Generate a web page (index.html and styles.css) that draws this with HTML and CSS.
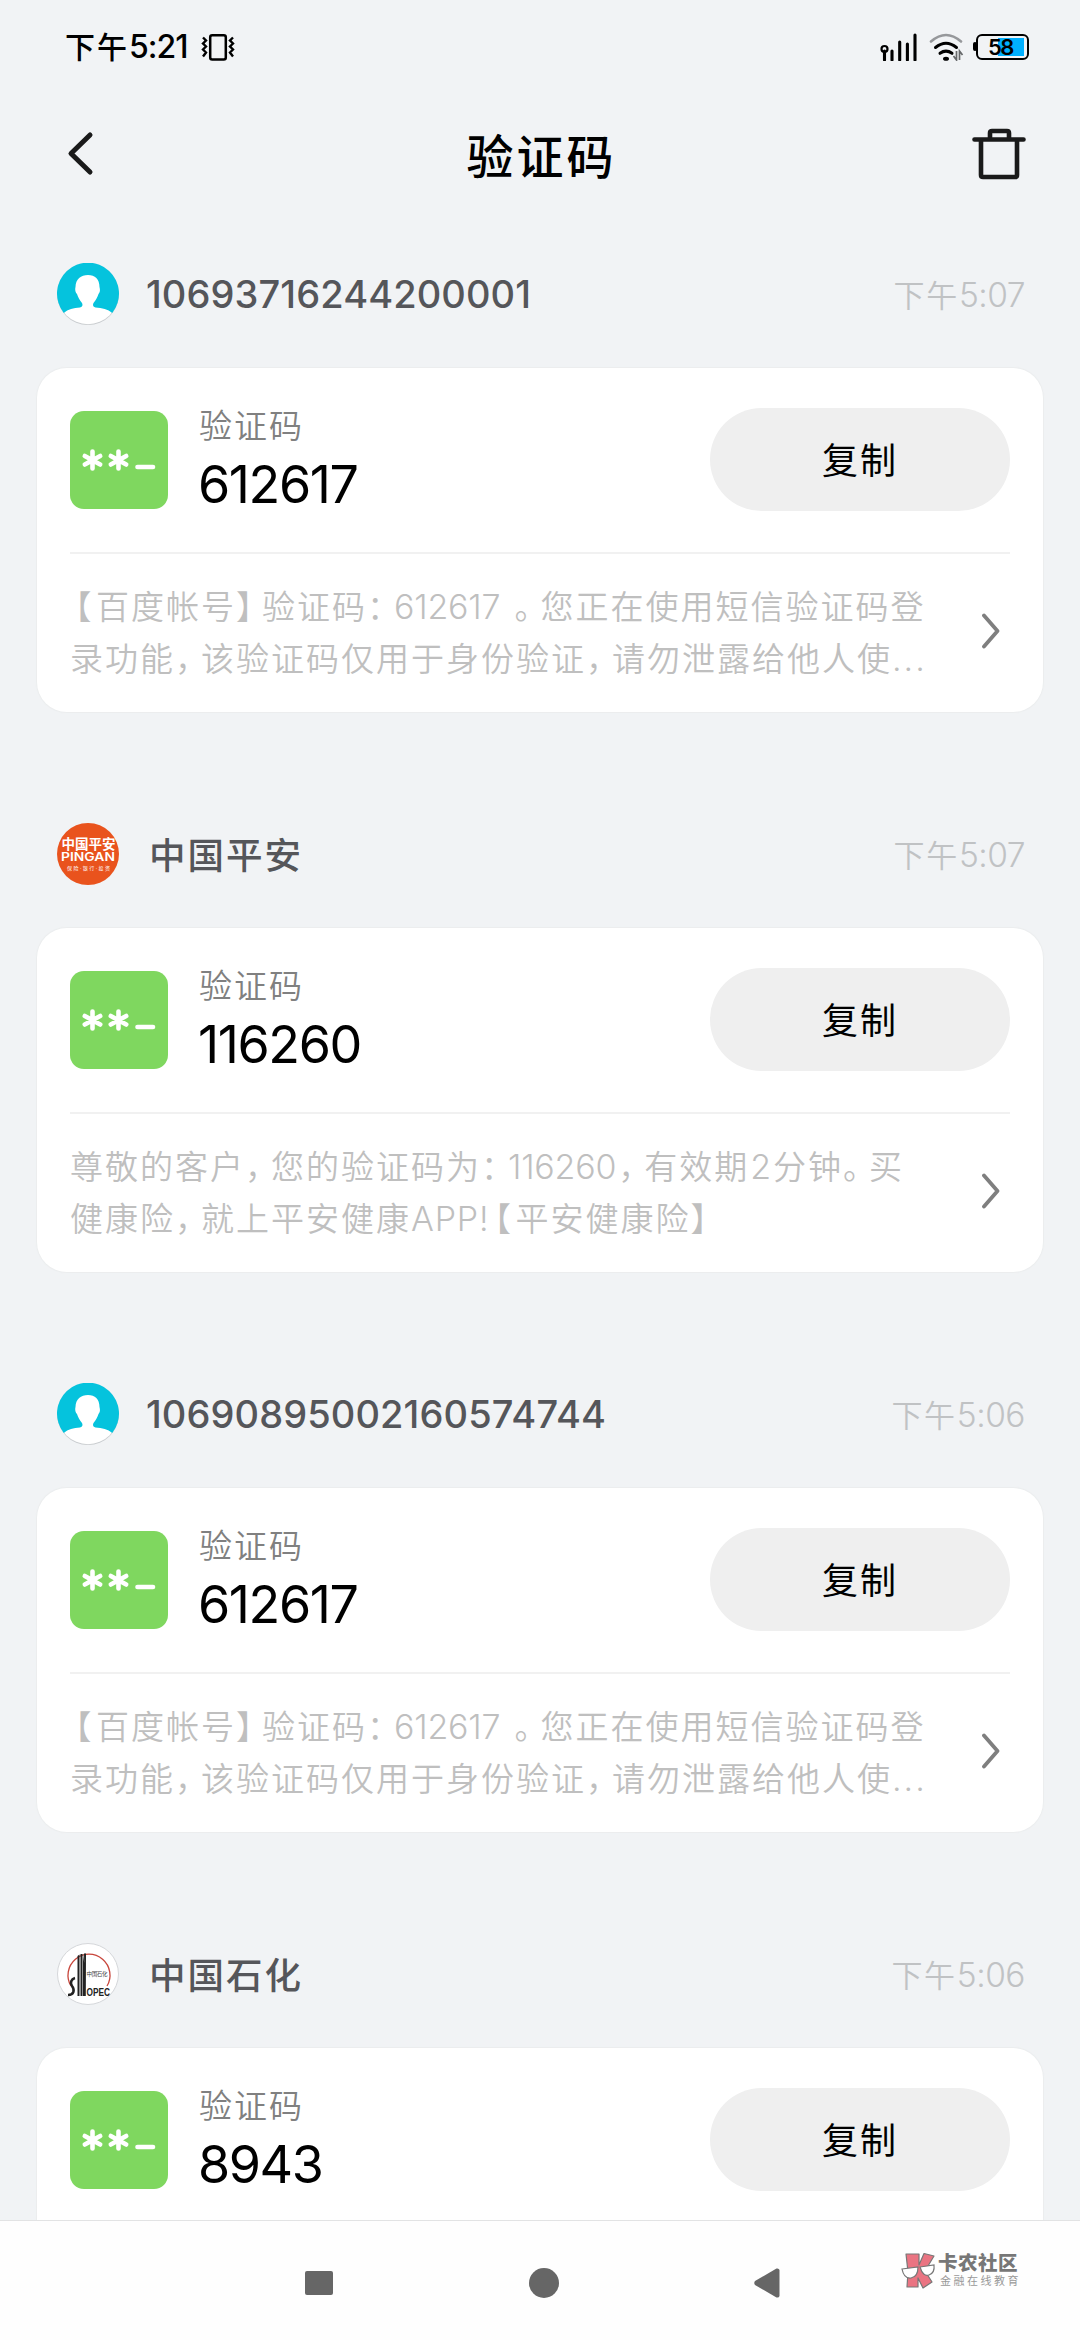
FILE: index.html
```
<!DOCTYPE html>
<html lang="zh-CN">
<head>
    <meta charset="UTF-8">
    <meta name="viewport" content="width=device-width, initial-scale=1.0">
    <title>验证码</title>
    <link rel="stylesheet" href="styles.css">
</head>
<body>
    <!-- Shared icons -->
    <svg class="defs" width="0" height="0">
        <symbol id="person" viewBox="0 0 62 62">
            <circle cx="31" cy="31" r="31" fill="#c9cccf"/>
            <circle cx="31" cy="30.6" r="30.6" fill="#fff"/>
            <path d="M6.8 50A31 31 0 1 1 55.2 50C51 46 45 45 38.500 44.500C36 44 35.500 42 36.500 40C39 37 40.500 34 41.500 31C43.500 29 43 26 42.500 24C42.500 16 38 12 31 12C24 12 18.500 16 18.500 24C18 26 18 29 20 31C21 34 22.500 37 25 40C26 42 25.500 44 23 44.500C16.500 45 11 46 6.800 50Z" fill="#05c3dd"/>
        </symbol>
        <symbol id="code" viewBox="0 0 98 98">
            <rect width="98" height="98" rx="14" fill="#7fd75f"/>
            <g stroke="#fff" stroke-width="4.600" stroke-linecap="round">
                <path d="M22.500 40.500v17M14.800 45l15.400 8.500M30.200 45l-15.400 8.500"/>
                <path d="M48.500 40.500v17M40.800 45l15.400 8.500M56.200 45l-15.400 8.500"/>
                <path d="M67.500 56h15.500"/>
            </g>
        </symbol>
        <symbol id="arrow" viewBox="0 0 20 36">
            <path d="M3 2.500L16.500 18L3 33.500" fill="none" stroke="#7f7f7f" stroke-width="3.800" stroke-linecap="round" stroke-linejoin="round"/>
        </symbol>
    </svg>

    <div class="status-bar">
        <span class="clock">下午<b>5:21</b></span>
        <svg class="vibrate" width="34" height="28" viewBox="0 0 34 28">
            <rect x="9.200" y="2.200" width="15.600" height="24.300" rx="2" fill="none" stroke="#000" stroke-width="2.500"/>
            <path d="M2 4.500l3 3-3 3 3 3-3 3 3 3-3 4M32 4.500l-3 3 3 3-3 3 3 3-3 3 3 4" fill="none" stroke="#000" stroke-width="2.400"/>
        </svg>
        <div class="status-icons">
            <svg width="38" height="28" viewBox="0 0 38 28">
                <circle cx="4.500" cy="16" r="3" fill="none" stroke="#000" stroke-width="2.200"/>
                <path d="M4.500 18v9M12 18v9M19.700 9v18M27.400 11v16M35 2v25" stroke="#000" stroke-width="3.100" stroke-linecap="round"/>
            </svg>
            <svg width="35" height="28" viewBox="0 0 35 28">
                <path d="M2 8.500Q17 -4.500 32 8.500" fill="none" stroke="#96989b" stroke-width="2.600" stroke-linecap="round"/>
                <path d="M6.500 14.500Q17 6 27.500 14.500M11 20.300Q17 16 23 20.300" fill="none" stroke="#000" stroke-width="3" stroke-linecap="round"/>
                <ellipse cx="17" cy="25.800" rx="3" ry="2" fill="#000"/>
                <path d="M27.500 18v9l-3-4M30.500 27v-9l3 4" fill="none" stroke="#66686a" stroke-width="1.700"/>
            </svg>
            <div class="battery"><span>58</span></div>
        </div>
    </div>

    <header class="title-bar">
        <svg width="28" height="48" viewBox="0 0 28 48">
            <path d="M23 5L4 23.500L23 42" fill="none" stroke="#1a1a1a" stroke-width="5" stroke-linecap="round" stroke-linejoin="round"/>
        </svg>
        <h1>验证码</h1>
        <svg width="54" height="54" viewBox="0 0 54 54">
            <path d="M2.500 12.500h49M9 13v35q0 2 2 2h32q2 0 2-2V13M18 12V6q0-2 2-2h15q2 0 2 2v6" fill="none" stroke="#1a1a1a" stroke-width="4.600" stroke-linecap="round"/>
        </svg>
    </header>

    <main class="list">
        <section class="item">
            <div class="sender">
                <svg class="avatar"><use href="#person"/></svg>
                <span class="name number">10693716244200001</span>
                <span class="time">下午<b>5:07</b></span>
            </div>
            <div class="card">
                <div class="card-top">
                    <svg class="code-icon"><use href="#code"/></svg>
                    <div class="code">
                        <div class="label">验证码</div>
                        <div class="value">612617</div>
                    </div>
                    <button>复制</button>
                </div>
                <div class="card-bottom">
                    <p><i class="open">【</i>百度帐号<i>】</i>验证码<i>：</i><span class="num">612617</span><i class="stop">。</i>您正在使用短信验证码登<br>录功能<i>，</i>该验证码仅用于身份验证<i>，</i>请勿泄露给他人使<span class="dots">...</span></p>
                    <svg class="arrow"><use href="#arrow"/></svg>
                </div>
            </div>
        </section>

        <section class="item">
            <div class="sender">
                <svg class="avatar" viewBox="0 0 62 62">
                    <circle cx="31" cy="31" r="31" fill="#e9531d"/>
                    <g fill="#fff" font-family="Inter, 'Noto Sans CJK SC', sans-serif">
                        <text x="4.500" y="25.500" font-size="13.500" font-weight="700" textLength="54">中国平安</text>
                        <text x="4" y="38" font-size="12" font-weight="600" textLength="54" lengthAdjust="spacingAndGlyphs">PINGAN</text>
                        <text x="10" y="47" font-size="5" textLength="43">保险·银行·投资</text>
                    </g>
                </svg>
                <span class="name">中国平安</span>
                <span class="time">下午<b>5:07</b></span>
            </div>
            <div class="card">
                <div class="card-top">
                    <svg class="code-icon"><use href="#code"/></svg>
                    <div class="code">
                        <div class="label">验证码</div>
                        <div class="value">116260</div>
                    </div>
                    <button>复制</button>
                </div>
                <div class="card-bottom">
                    <p>尊敬的客户<i>，</i>您的验证码为<i>：</i><span class="num">116260</span><i>，</i>有效期<span class="num">2</span>分钟<i>。</i>买<br>健康险<i>，</i>就上平安健康<span class="latin">APP!</span><i class="open">【</i>平安健康险<i>】</i></p>
                    <svg class="arrow"><use href="#arrow"/></svg>
                </div>
            </div>
        </section>

        <section class="item">
            <div class="sender">
                <svg class="avatar"><use href="#person"/></svg>
                <span class="name number">10690895002160574744</span>
                <span class="time">下午<b>5:06</b></span>
            </div>
            <div class="card">
                <div class="card-top">
                    <svg class="code-icon"><use href="#code"/></svg>
                    <div class="code">
                        <div class="label">验证码</div>
                        <div class="value">612617</div>
                    </div>
                    <button>复制</button>
                </div>
                <div class="card-bottom">
                    <p><i class="open">【</i>百度帐号<i>】</i>验证码<i>：</i><span class="num">612617</span><i class="stop">。</i>您正在使用短信验证码登<br>录功能<i>，</i>该验证码仅用于身份验证<i>，</i>请勿泄露给他人使<span class="dots">...</span></p>
                    <svg class="arrow"><use href="#arrow"/></svg>
                </div>
            </div>
        </section>

        <section class="item">
            <div class="sender">
                <svg class="avatar" viewBox="0 0 62 62">
                    <circle cx="31" cy="31" r="30.500" fill="#fff" stroke="#d5d7da"/>
                    <path d="M14 43A21 21 0 1 1 50 43" fill="none" stroke="#c8463c" stroke-width="1.300"/>
                    <path d="M20.500 13L22.500 11.500V53H20.500ZM23.500 11h2V53h-2ZM26 10.500l2.500 20V53H26ZM27 10.500h2l-.2 42.500h-1Z" fill="#222"/>
                    <path d="M18 35C14 36 13 40 15 43C18 47 17 52 11 52" fill="none" stroke="#222" stroke-width="2.500"/>
                    <text x="29.500" y="33" font-family="'Noto Sans CJK SC', sans-serif" font-size="5.500" fill="#444" textLength="21">中国石化</text>
                    <text x="29.500" y="53" font-family="'Liberation Sans', sans-serif" font-weight="700" font-size="10.500" fill="#222" textLength="23.500" lengthAdjust="spacingAndGlyphs">OPEC</text>
                </svg>
                <span class="name">中国石化</span>
                <span class="time">下午<b>5:06</b></span>
            </div>
            <div class="card">
                <div class="card-top">
                    <svg class="code-icon"><use href="#code"/></svg>
                    <div class="code">
                        <div class="label">验证码</div>
                        <div class="value">8943</div>
                    </div>
                    <button>复制</button>
                </div>
            </div>
        </section>
    </main>

    <nav class="nav-bar">
        <svg width="28" height="30" viewBox="0 0 28 30"><rect y="3" width="28" height="24" rx="2"/></svg>
        <svg width="30" height="30" viewBox="0 0 30 30"><circle cx="15" cy="15" r="15"/></svg>
        <svg width="26" height="30" viewBox="0 0 26 30"><path d="M1 13L22.500.5Q25 0 25.500 2V28Q25 30 22.500 29.500L1 17Q-.5 15 1 13Z"/></svg>
        <div class="watermark">
            <svg width="36" height="38" viewBox="0 0 36 38">
                <path d="M6 2h13v11L24 1.500l10 2.500-9 15 7 11-9 6-5-10v9H7L8 20Z" fill="#ea7482" stroke="#777" stroke-width="1.200" stroke-linejoin="round"/>
                <path d="M2 17l16-2q0 10-7 11t-9-9ZM20 15l14-2q1 8-5 10t-9-8Z" fill="#fff" stroke="#777" stroke-width="1.200"/>
            </svg>
            <div>
                <div class="brand">卡农社区</div>
                <div class="slogan">金融在线教育</div>
            </div>
        </div>
    </nav>
</body>
</html>
```

FILE: styles.css
```
* {
    box-sizing: border-box;
}
body {
    font-family: Inter, "Noto Sans CJK SC", sans-serif;
    margin: 0;
    height: 2340px;
    display: flex;
    flex-direction: column;
    overflow: hidden;
    background-color: #f1f3f5;
    color: #000;
}
svg {
    display: block;
    flex: none;
}
b, i {
    font-weight: inherit;
    font-style: normal;
}
.defs {
    position: absolute;
}

/* Status bar */
.status-bar {
    height: 94px;
    padding: 0 51px 0 65px;
    display: flex;
    align-items: center;
}
.clock {
    font-size: 30px;
    font-weight: 500;
    letter-spacing: 2px;
    line-height: 40px;
}
.clock b {
    font-size: 32px;
    font-weight: 500;
    letter-spacing: -1px;
}
.vibrate {
    margin-left: 14px;
}
.status-icons {
    margin-left: auto;
    display: flex;
    align-items: center;
    gap: 11px;
}
.battery {
    position: relative;
    width: 53px;
    height: 26px;
    border: 2.5px solid #000;
    border-radius: 6px;
    margin-left: 1px;
    padding: 2px 4px 2px 0;
    background: linear-gradient(#00b0ff, #00b0ff) no-repeat 20px 2px / 26px 18px;
    font-size: 22px;
    font-weight: 600;
    line-height: 19px;
    letter-spacing: -1.5px;
    text-align: center;
}
.battery::before {
    content: "";
    position: absolute;
    left: -5px;
    top: 6px;
    width: 4px;
    height: 9px;
    border-radius: 2px;
    background: #000;
}

/* Title */
.title-bar {
    height: 120px;
    padding: 0 54px 0 67px;
    display: flex;
    align-items: center;
    justify-content: space-between;
}
.title-bar h1 {
    margin: 6px 0 0 16px;
    font-size: 47px;
    font-weight: 500;
    letter-spacing: 3px;
    line-height: 60px;
}

/* Message list */
.list {
    flex: 1;
    min-height: 0;
    overflow: hidden;
    padding: 48px 37px 0;
}
.item {
    margin-bottom: 110px;
}
.sender {
    height: 63px;
    margin-bottom: 43px;
    padding: 0 18px 0 20px;
    display: flex;
    align-items: center;
}
.avatar {
    width: 62px;
    height: 62px;
}
.name {
    margin-left: 30px;
    font-size: 36.5px;
    font-weight: 500;
    letter-spacing: 2px;
    color: #55565a;
}
.number {
    margin-left: 27px;
    font-size: 38px;
    letter-spacing: 0.1px;
}
.time {
    margin-left: auto;
    font-size: 31px;
    font-weight: 350;
    letter-spacing: 1.700px;
    color: #c0c2c4;
}
.time b {
    font-size: 33.5px;
    letter-spacing: -0.5px;
}
.card {
    height: 344px;
    padding: 0 33px;
    background-color: #fff;
    border-radius: 30px;
    box-shadow: 0 0 1px 1px #ebedee;
}
.card-top {
    height: 186px;
    padding-top: 40px;
    display: flex;
    border-bottom: 2px solid #f1f1f1;
}
.code-icon {
    width: 98px;
    height: 98px;
    margin-top: 3px;
}
.code {
    margin-left: 31px;
}
.label {
    font-size: 33px;
    font-weight: 350;
    letter-spacing: 2px;
    line-height: 36px;
    color: #808080;
}
.value {
    margin: 8px 0 0 -1px;
    font-size: 52px;
    font-weight: 400;
    line-height: 66px;
    letter-spacing: -1.400px;
}
button {
    margin-left: auto;
    width: 300px;
    height: 103px;
    padding: 0 0 3px;
    border: 0;
    border-radius: 52px;
    background-color: #efefef;
    font-family: inherit;
    font-size: 36px;
    font-weight: 400;
    letter-spacing: 2px;
    color: #000;
}
.card-bottom {
    height: 158px;
    display: flex;
    align-items: center;
    justify-content: space-between;
}
.card-bottom p {
    margin: 0;
    font-size: 33px;
    font-weight: 350;
    letter-spacing: 2px;
    line-height: 52px;
    white-space: nowrap;
    color: #bfbfbf;
}
/* punctuation is set narrower than a full em */
p i {
    letter-spacing: -7px;
}
p .open {
    padding-left: 5px;
    font-feature-settings: "halt";
    letter-spacing: 4.5px;
}
p .stop {
    padding-left: 12px;
}
.num, .latin, .dots {
    font-size: 34px;
    letter-spacing: -0.200px;
}
.num {
    padding: 0 2px 0 1px;
}
.latin {
    letter-spacing: 0.8px;
}
.dots {
    letter-spacing: 2px;
}
.arrow {
    width: 20px;
    height: 36px;
    margin: -5px 9px 0 0;
}

/* System navigation */
.nav-bar {
    position: relative;
    height: 120px;
    border-top: 1px solid #e2e3e4;
    padding: 4px 300px 0 305px;
    background-color: #fefefe;
    display: flex;
    align-items: center;
    justify-content: space-between;
    fill: #666;
}
.watermark {
    position: absolute;
    left: 900px;
    top: 31px;
    display: flex;
    gap: 2px;
    color: #777;
}
.brand {
    font-size: 19.500px;
    font-weight: 900;
    line-height: 22px;
    letter-spacing: 0.5px;
}
.slogan {
    margin-left: 2px;
    font-size: 11px;
    line-height: 14px;
    letter-spacing: 2.500px;
    color: #999;
}
```
